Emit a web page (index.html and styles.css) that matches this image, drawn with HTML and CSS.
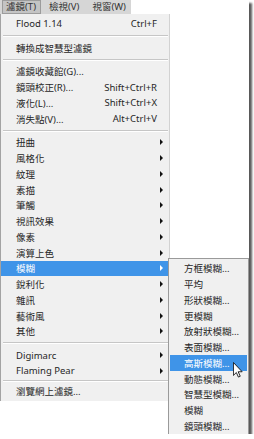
FILE: index.html
```html
<!DOCTYPE html>
<html lang="zh-Hant">
   <head>
      <meta charset="UTF-8">
      <title>濾鏡選單</title>
      <link rel="stylesheet" href="styles.css">
   </head>
   <body>
      <div class="shot">
         <div class="menubar">
            <span class="tab active">濾鏡(T)</span>
            <span class="tab">檢視(V)</span>
            <span class="tab">視窗(W)</span>
         </div>
         <ul class="menu">
            <li class="item"><span>Flood 1.14</span><span class="key">Ctrl+F</span></li>
            <li class="sep"></li>
            <li class="item">轉換成智慧型濾鏡</li>
            <li class="sep"></li>
            <li class="item">濾鏡收藏館(G)...</li>
            <li class="item"><span>鏡頭校正(R)...</span><span class="key">Shift+Ctrl+R</span></li>
            <li class="item"><span>液化(L)...</span><span class="key">Shift+Ctrl+X</span></li>
            <li class="item"><span>消失點(V)...</span><span class="key">Alt+Ctrl+V</span></li>
            <li class="sep"></li>
            <li class="item has-sub">扭曲</li>
            <li class="item has-sub">風格化</li>
            <li class="item has-sub">紋理</li>
            <li class="item has-sub">素描</li>
            <li class="item has-sub">筆觸</li>
            <li class="item has-sub">視訊效果</li>
            <li class="item has-sub">像素</li>
            <li class="item has-sub">演算上色</li>
            <li class="item has-sub hot">模糊
               <!-- flyout for the hovered entry -->
               <ul class="menu submenu">
                  <li class="item">方框模糊...</li>
                  <li class="item">平均</li>
                  <li class="item">形狀模糊...</li>
                  <li class="item">更模糊</li>
                  <li class="item">放射狀模糊...</li>
                  <li class="item">表面模糊...</li>
                  <li class="item hot">高斯模糊...</li>
                  <li class="item">動態模糊...</li>
                  <li class="item">智慧型模糊...</li>
                  <li class="item">模糊</li>
                  <li class="item">鏡頭模糊...</li>
               </ul>
            </li>
            <li class="item has-sub">銳利化</li>
            <li class="item has-sub">雜訊</li>
            <li class="item has-sub">藝術風</li>
            <li class="item has-sub">其他</li>
            <li class="sep"></li>
            <li class="item has-sub">Digimarc</li>
            <li class="item has-sub">Flaming Pear</li>
            <li class="sep short"></li>
            <li class="item">瀏覽網上濾鏡...</li>
         </ul>
         <svg class="cursor" viewBox="0 0 12 19" width="10" height="16">
            <path d="M0.5 0.5 L0.5 16 L4 12.5 L6.5 18 L8.7 17 L6.2 11.6 L11 11.6 Z" fill="#fff" stroke="#000" stroke-width="1" stroke-linejoin="miter"/>
         </svg>
      </div>
   </body>
</html>
```

FILE: styles.css
```css
body {
margin: 0;
background-color: #fff;
font-family: "Noto Sans", "Noto Sans CJK TC", sans-serif;
font-size: 9.5px;
color: #1b1b1b;
}
.shot {
position: relative;
width: 249px;
height: 434px;
box-shadow: 3px 3px 2px rgba(0, 0, 0, 0.65);
}
.menubar {
display: flex;
gap: 4px;
width: 131px;
height: 14px;
padding-left: 2px;
box-sizing: border-box;
background-color: #d6d6d6;
}
.tab {
padding: 0 5px 0 4px;
line-height: 14px;
color: #333;
white-space: nowrap;
}
.tab.active {
background-color: #c4c4c4;
box-shadow: inset 0 0 0 1px #9c9c9c;
}
.menu {
list-style: none;
margin: 0;
padding: 2px 0;
width: 170px;
box-sizing: border-box;
background-color: #f0f0f0;
border-left: 1px solid #a3a3a3;
border-right: 1px solid #d2d2d2;
}
.item {
position: relative;
display: flex;
align-items: center;
height: 15.75px;
padding-left: 15px;
white-space: nowrap;
color: #262626;
}
/* arrow slot, 12px wide, drawn only for entries with a flyout */
.item::after {
content: "";
flex: none;
width: 0;
height: 0;
margin: 0 6px 0 3px;
border-left: 3px solid transparent;
border-top: 3px solid transparent;
border-bottom: 3px solid transparent;
}
.has-sub::after {
margin-left: auto;
border-left-color: #111;
}
.key {
margin-left: auto;
}
.item.hot {
background-color: #3f94e8;
color: #fff;
}
.item.hot::after {
border-left-color: #fff;
}
.sep {
height: 0;
margin: 3px 1px 3px 2px;
border-top: 1px solid #c6c6c6;
border-bottom: 1px solid #fff;
}
.sep.short {
margin: 1px 1px 1px 2px;
}
.submenu {
position: absolute;
left: 167px;
top: -3px;
width: 81px;
border: 1px solid #9a9a9a;
}
.submenu .item {
color: #262626;
}
.submenu .item::after {
display: none;
}
.submenu .item.hot {
margin: 0 1px;
padding-left: 14px;
color: #fff;
}
.cursor {
position: absolute;
left: 233px;
top: 362px;
}
```
